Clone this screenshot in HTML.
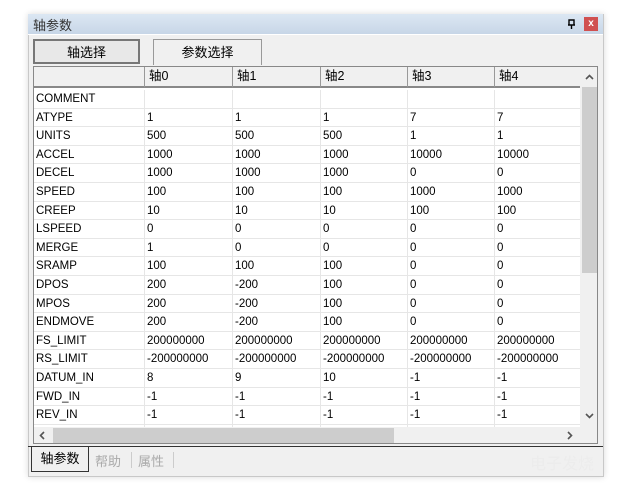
<!DOCTYPE html><html><head><meta charset="utf-8"><style>
body{margin:0;width:627px;height:489px;background:#fff;position:relative;overflow:hidden;font-family:"Liberation Sans","Noto Sans CJK SC",sans-serif;font-size:12px;color:#000}
.a{position:absolute}
.win{left:28px;top:14px;width:574px;height:461px;background:#f0f0f0;border:1px solid #c8c8c8;box-shadow:0 0 6px rgba(0,0,0,.15)}
.title{left:28px;top:14px;width:575px;height:20px;background:linear-gradient(#dce7f3,#c7d6e7);font-size:13px;color:#333}
.btn{height:22px;border:1px solid #777;background:#e8e8e8;text-align:center;line-height:22px;font-size:13px;box-sizing:border-box}
.grid{left:33px;top:66px;width:565px;height:378px;border:1px solid #888;background:#fff;box-sizing:border-box;overflow:hidden}
.row{position:absolute;left:0;height:18.6px;line-height:18.6px;width:546px;border-bottom:1px solid #e6e6e6;box-sizing:border-box}
.c{position:absolute;top:0;height:100%;border-right:1px solid #e6e6e6;box-sizing:border-box;padding-left:2px;white-space:nowrap;font-size:11.5px}
.hdr .c{background:#f0f0f0;border-right:1px solid #999;border-bottom:2px solid #888;font-size:12.5px;padding-left:4px}
</style></head><body>
<div class="a win"></div>
<div class="a title"><span class="a" style="left:5px;top:1px">轴参数</span>
<svg class="a" style="left:539px;top:5px" width="9" height="10" viewBox="0 0 9 10"><path d="M2 1H7V6H2Z M1 6H8 M4.5 6V10" stroke="#000" stroke-width="1.4" fill="none"/></svg>
<span class="a" style="left:556px;top:3px;width:14px;height:14px;background:#d05050;color:#fff;font-size:10px;text-align:center;line-height:13px;font-weight:bold">x</span></div>
<div class="a" style="left:28px;top:34px;width:575px;height:1px;background:#fff"></div>
<div class="a btn" style="left:33px;top:39px;width:107px;height:25px;line-height:24px;border:2px solid #777">轴选择</div>
<div class="a btn" style="left:153px;top:39px;width:109px;height:26px;line-height:25px;background:#f0f0f0;border-color:#999;border-bottom:none">参数选择</div>
<div class="a grid">
<div class="row hdr" style="top:0;height:21px;border:none">
<div class="c" style="left:0;width:111px"></div><div class="c" style="left:111px;width:88px">轴0</div><div class="c" style="left:199px;width:88px">轴1</div><div class="c" style="left:287px;width:87px">轴2</div><div class="c" style="left:374px;width:87px">轴3</div><div class="c" style="left:461px;width:86px">轴4</div></div>
<div id="rows"></div>
<div class="a" style="left:546px;top:0;width:18px;height:360px;background:#f0f0f0"></div>
<div class="a" style="left:548px;top:20px;width:15px;height:186px;background:#cdcdcd"></div>
<svg class="a" style="left:551px;top:7px" width="9" height="6"><path d="M1 5L4.5 1.5L8 5" stroke="#555" stroke-width="1.6" fill="none"/></svg>
<svg class="a" style="left:551px;top:346px" width="9" height="6"><path d="M1 1L4.5 4.5L8 1" stroke="#555" stroke-width="1.6" fill="none"/></svg>
<div class="a" style="left:0;top:360px;width:564px;height:17px;background:#f0f0f0"></div>
<div class="a" style="left:19px;top:361px;width:341px;height:15px;background:#cdcdcd"></div>
<svg class="a" style="left:5px;top:364px" width="6" height="9"><path d="M5 1L1.5 4.5L5 8" stroke="#555" stroke-width="1.6" fill="none"/></svg>
<svg class="a" style="left:533px;top:364px" width="6" height="9"><path d="M1 1L4.5 4.5L1 8" stroke="#555" stroke-width="1.6" fill="none"/></svg>
</div>
<div class="a" style="left:28px;top:446px;width:575px;height:1px;background:#333"></div>
<div class="a" style="left:31px;top:447px;width:56px;height:24px;background:#f0f0f0;border:1px solid #333;border-top:none;font-size:13px;line-height:24px;text-align:center">轴参数</div>
<div class="a" style="left:95px;top:451px;font-size:13px;color:#aaa">帮助</div>
<div class="a" style="left:131px;top:452px;width:1px;height:16px;background:#ccc"></div>
<div class="a" style="left:138px;top:451px;font-size:13px;color:#aaa">属性</div>
<div class="a" style="left:173px;top:452px;width:1px;height:16px;background:#ccc"></div>
<div class="a" style="left:530px;top:450px;font-size:16px;color:#ececec">电子发烧</div>
<script>
var d=[["COMMENT","","","","",""],["ATYPE","1","1","1","7","7"],["UNITS","500","500","500","1","1"],["ACCEL","1000","1000","1000","10000","10000"],["DECEL","1000","1000","1000","0","0"],["SPEED","100","100","100","1000","1000"],["CREEP","10","10","10","100","100"],["LSPEED","0","0","0","0","0"],["MERGE","1","0","0","0","0"],["SRAMP","100","100","100","0","0"],["DPOS","200","-200","100","0","0"],["MPOS","200","-200","100","0","0"],["ENDMOVE","200","-200","100","0","0"],["FS_LIMIT","200000000","200000000","200000000","200000000","200000000"],["RS_LIMIT","-200000000","-200000000","-200000000","-200000000","-200000000"],["DATUM_IN","8","9","10","-1","-1"],["FWD_IN","-1","-1","-1","-1","-1"],["REV_IN","-1","-1","-1","-1","-1"],["","","","","",""]];
var L=[0,111,199,287,374,461],W=[111,88,88,87,87,86],h="";
d.forEach(function(r,i){h+='<div class="row" style="top:'+(23+i*18.6)+'px">';r.forEach(function(v,j){h+='<div class="c" style="left:'+L[j]+'px;width:'+W[j]+'px">'+v+'</div>'});h+='</div>'});
document.getElementById("rows").innerHTML=h;
</script>
</body></html>
